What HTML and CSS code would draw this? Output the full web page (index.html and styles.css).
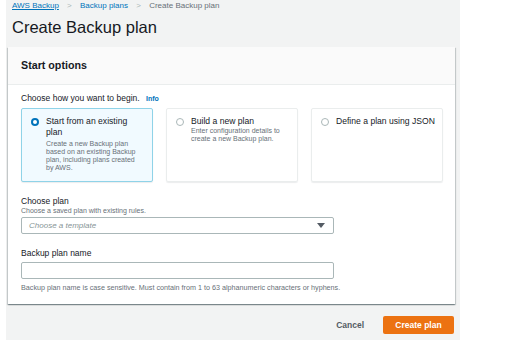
FILE: index.html
```html
<!DOCTYPE html>
<html lang="en">
<head>
  <meta charset="UTF-8" />
  <title>Create Backup plan</title>
  <link rel="stylesheet" href="styles.css">
</head>
<body>
  <div class="page">
    <nav class="crumbs">
      <a href="#">AWS Backup</a>
      <span class="sep">&gt;</span>
      <a href="#" class="plain">Backup plans</a>
      <span class="sep">&gt;</span>
      <span class="current">Create Backup plan</span>
    </nav>
    <h1>Create Backup plan</h1>

    <div class="card">
      <div class="card-head">Start options</div>
      <div class="card-body">
        <div class="prompt">Choose how you want to begin. <a href="#" class="info">Info</a></div>

        <div class="tiles">
          <div class="tile selected">
            <span class="radio on"></span>
            <div class="tile-text">
              <div class="tile-title">Start from an existing plan</div>
              <div class="tile-desc">Create a new Backup plan based on an existing Backup plan, including plans created by AWS.</div>
            </div>
          </div>
          <div class="tile">
            <span class="radio"></span>
            <div class="tile-text">
              <div class="tile-title">Build a new plan</div>
              <div class="tile-desc">Enter configuration details to create a new Backup plan.</div>
            </div>
          </div>
          <div class="tile">
            <span class="radio"></span>
            <div class="tile-text">
              <div class="tile-title">Define a plan using JSON</div>
            </div>
          </div>
        </div>

        <div class="field">
          <div class="label">Choose plan</div>
          <div class="desc">Choose a saved plan with existing rules.</div>
          <div class="select">
            <span class="placeholder">Choose a template</span>
            <span class="caret"></span>
          </div>
        </div>

        <div class="field">
          <div class="label">Backup plan name</div>
          <div class="input"></div>
          <div class="help">Backup plan name is case sensitive. Must contain from 1 to 63 alphanumeric characters or hyphens.</div>
        </div>
      </div>
    </div>

    <div class="actions">
      <a href="#" class="cancel">Cancel</a>
      <button class="btn-primary">Create plan</button>
    </div>
  </div>
</body>
</html>
```

FILE: styles.css
```css
* { margin:0; padding:0; box-sizing:border-box; font-family:'Liberation Sans', Arial, sans-serif; }
body { background:#fff; color:#16191f; }

.page {
  width:454px; height:340px; margin-left:6px;
  background:#f2f3f3; padding:0 6px 0 2px;
}

/* header */
.crumbs { padding-left:4px; font-size:8px; line-height:12px; color:#687078; }
.crumbs a { color:#0073bb; }
.crumbs a.plain { text-decoration:none; }
.crumbs .sep { color:#aab7b8; margin:0 6px; }

h1 {
  padding-left:4px; margin:5px 0 10px;
  font-size:16.5px; line-height:20px; font-weight:400; color:#16191f;
}

/* card */
.card {
  background:#fff; width:447px;
  box-shadow:0 1px 1px rgba(0,28,36,0.3), 1px 1px 1px rgba(0,28,36,0.15), -1px 1px 1px rgba(0,28,36,0.15);
}
.card-head {
  height:38px; line-height:37px; padding:0 13px;
  background:#fafafa; border-bottom:1px solid #eaeded;
  font-size:10.7px; font-weight:700;
}
.card-body { padding:8px 13px 12px; }

.prompt { font-size:8.5px; line-height:10px; }
.prompt .info { color:#0073bb; font-weight:700; font-size:7px; text-decoration:none; margin-left:4px; }

.tiles { display:grid; grid-template-columns:repeat(3, 132px); gap:13px; margin-top:4px; }
.tile {
  display:flex; gap:7px; height:74px;
  padding:7px 3px 0 9px;
  border:1px solid #eaeded; border-radius:2px;
  box-shadow:0 1px 1px rgba(0,28,36,0.08);
}
.tile.selected { background:#f1faff; border-color:#8fd3e8; }

.radio {
  flex:none; width:8px; height:8px; margin-top:1.5px;
  border:1px solid #aab7b8; border-radius:50%; background:#fff;
}
.radio.on { border:2.5px solid #0073bb; }

.tile-title { font-size:8.6px; line-height:11px; }
.tile-desc { font-size:7px; line-height:8.3px; color:#687078; padding-right:7px; }
.tile.selected .tile-title { padding-right:4px; }
.tile.selected .tile-desc { margin-top:1.5px; }

/* fields */
.field { margin-top:14px; }
.label { font-size:8.5px; line-height:10px; }
.desc { font-size:7px; line-height:9px; color:#687078; }

.select {
  display:flex; align-items:center; justify-content:space-between;
  width:313px; height:17px; margin-top:2px; padding:0 8px 0 7px;
  border:1px solid #aab7b8; border-radius:2px; background:#fff;
}
.placeholder { font-size:8px; font-style:italic; color:#879596; }
.caret {
  width:0; height:0;
  border-left:4px solid transparent; border-right:4px solid transparent;
  border-top:5px solid #545b64;
}

.input {
  width:313px; height:17px; margin-top:4px;
  border:1px solid #aab7b8; border-radius:2px; background:#fff;
}
.help { margin-top:4px; font-size:7.2px; line-height:9px; color:#687078; white-space:nowrap; }

/* footer */
.actions {
  display:flex; justify-content:flex-end; align-items:center; gap:19px;
  margin-top:12px;
}
.cancel { font-size:8.5px; font-weight:700; color:#545b64; text-decoration:none; }
.btn-primary {
  width:71px; height:18px; border:none; border-radius:2px;
  background:#ec7211; color:#fff; font-size:8.5px; font-weight:700;
}
```
